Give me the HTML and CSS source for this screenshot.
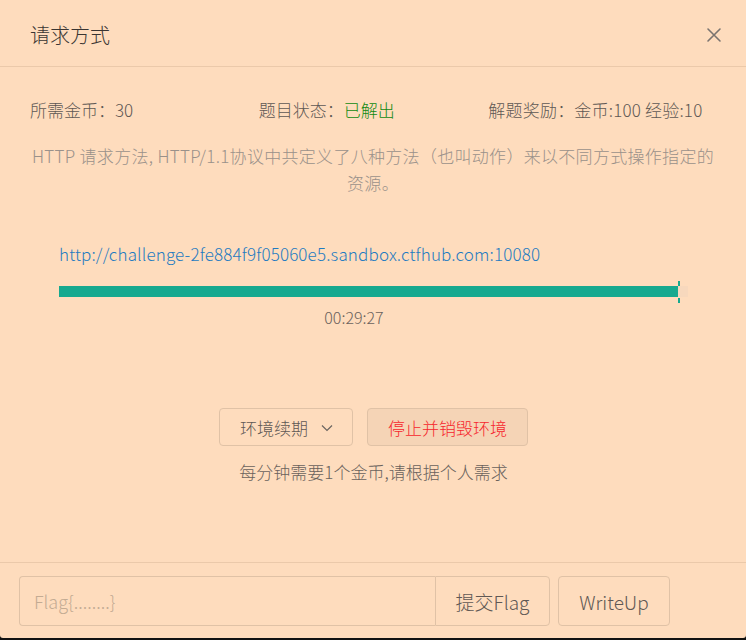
FILE: index.html
```html
<!DOCTYPE html>
<html lang="zh-CN">
<head>
<meta charset="utf-8">
<title>请求方式</title>
<link rel="stylesheet" href="styles.css">
</head>
<body>
<div class="modal">
  <div class="modal-header">
    <h4 class="modal-title">请求方式</h4>
    <button class="close" type="button" aria-label="关闭">
      <svg width="16" height="16" viewBox="0 0 16 16"><path d="M2 2 L14 14 M14 2 L2 14" stroke="#7a7470" stroke-width="1.6" fill="none" stroke-linecap="round"/></svg>
    </button>
  </div>
  <div class="modal-body">
    <div class="info">
      <div>所需金币：30</div>
      <div>题目状态：<span class="solved">已解出</span></div>
      <div>解题奖励：金币:100 经验:10</div>
    </div>
    <p class="desc">HTTP 请求方法, HTTP/1.1协议中共定义了八种方法（也叫动作）来以不同方式操作指定的资源。</p>
    <div class="env">
      <a class="url" href="#">http://challenge-2fe884f9f05060e5.sandbox.ctfhub.com:10080</a>
      <div class="progress">
        <div class="progress-fill" style="width:98.4%"></div>
      </div>
      <div class="timer">00:29:27</div>
      <div class="actions">
        <button class="btn btn-renew" type="button">环境续期
          <svg class="caret" width="12" height="8" viewBox="0 0 12 8"><path d="M1 1.5 L6 6.5 L11 1.5" stroke="#6b6560" stroke-width="1.2" fill="none"/></svg>
        </button>
        <button class="btn btn-stop" type="button">停止并销毁环境</button>
      </div>
      <p class="note">每分钟需要1个金币,请根据个人需求</p>
    </div>
  </div>
  <div class="modal-footer">
    <div class="input-group">
      <input class="flag-input" type="text" placeholder="Flag{........}">
      <button class="btn-submit" type="button">提交Flag</button>
    </div>
    <button class="btn-writeup" type="button">WriteUp</button>
  </div>
</div>
</body>
</html>
```
FILE: styles.css
```css
* { box-sizing: border-box; }
html, body { margin: 0; padding: 0; }
body {
  background: #111;
  font-family: "Noto Sans CJK SC", "Noto Sans", sans-serif;
  font-weight: 300;
  color: #5c5550;
  height: 640px;
  overflow: hidden;
}
.modal {
  width: 746px;
  height: 638px;
  background: #fedcbd;
  border-radius: 0 0 3px 3px;
  display: flex;
  flex-direction: column;
}
.modal-header {
  height: 67px;
  padding: 23px 30px 0 30px;
  border-bottom: 1px solid #ebc9aa;
  display: flex;
  justify-content: space-between;
  align-items: flex-start;
}
.modal-title {
  margin: 0;
  font-size: 20px;
  font-weight: 300;
  line-height: 24px;
  color: #3a3532;
}
.close {
  border: 0;
  background: none;
  padding: 0;
  margin: 4px -6px 0 0;
  width: 16px;
  height: 16px;
  cursor: pointer;
}
.close svg { display: block; }
.modal-body {
  flex: 1;
  padding: 31px 30px 0 30px;
  border-bottom: 1px solid #ebc9aa;
}
.info {
  display: grid;
  grid-template-columns: repeat(3, 1fr);
  font-size: 17px;
  line-height: 24px;
  color: #5f5854;
}
.info > div:nth-child(3) { padding-left: 1px; letter-spacing: 0.2px; }
.solved { color: #118a11; }
.desc {
  margin: 20px 0 0 0;
  font-size: 17px;
  line-height: 27px;
  letter-spacing: 0.3px;
  text-align: center;
  color: #9a918a;
}
.env {
  padding: 46px 28px 0 29px;
}
.url {
  display: block;
  font-size: 17px;
  letter-spacing: 0.15px;
  line-height: 24px;
  color: #1f7bc1;
  text-decoration: none;
}
.progress {
  margin-top: 20px;
  height: 11px;
  background: #f7d8bd;
  position: relative;
}
.progress-fill {
  height: 100%;
  background: #16a98f;
  position: relative;
}
.progress-fill::before,
.progress-fill::after {
  content: "";
  position: absolute;
  right: -2px;
  width: 2px;
  height: 5px;
  background: #16a98f;
}
.progress-fill::before { top: -5px; }
.progress-fill::after { bottom: -6px; }
.timer {
  margin-top: 9px;
  padding-right: 39px;
  font-size: 16px;
  line-height: 22px;
  text-align: center;
  color: #6a625c;
}
.actions {
  margin-top: 80px;
  display: flex;
  justify-content: center;
  gap: 14px;
}
.btn {
  height: 38px;
  font-family: inherit;
  font-weight: 300;
  font-size: 17px;
  border: 1px solid #e0c2a6;
  border-radius: 4px;
  display: flex;
  align-items: center;
  justify-content: center;
  cursor: pointer;
}
.btn-renew {
  width: 134px;
  background: #fedcbd;
  color: #5f5854;
  padding: 0 0 0 1px;
}
.caret { margin-left: 13px; margin-top: 2px; }
.btn-stop {
  width: 161px;
  background: #f5d4b6;
  color: #f5262d;
}
.note {
  margin: 14px 0 0 0;
  font-size: 17px;
  line-height: 24px;
  text-align: center;
  color: #6a625c;
}
.modal-footer {
  height: 75px;
  padding: 13px 19px 0 19px;
  display: flex;
  align-items: flex-start;
  gap: 8px;
}
.input-group {
  display: flex;
  height: 50px;
}
.flag-input {
  width: 416px;
  height: 50px;
  border: 1px solid #e0c2a6;
  border-right: 0;
  border-radius: 4px 0 0 4px;
  background: transparent;
  padding: 0 0 0 14px;
  font-family: inherit;
  font-weight: 300;
  font-size: 18px;
  color: #5f5854;
  outline: none;
}
.flag-input::placeholder { color: #c3ab93; }
.btn-submit,
.btn-writeup {
  height: 50px;
  border: 1px solid #e0c2a6;
  background: #fedcbd;
  font-family: inherit;
  font-weight: 300;
  font-size: 19px;
  color: #5f5854;
  cursor: pointer;
  padding: 0;
}
.btn-submit {
  width: 115px;
  border-radius: 0 4px 4px 0;
}
.btn-writeup {
  width: 112px;
  border-radius: 4px;
}
```
